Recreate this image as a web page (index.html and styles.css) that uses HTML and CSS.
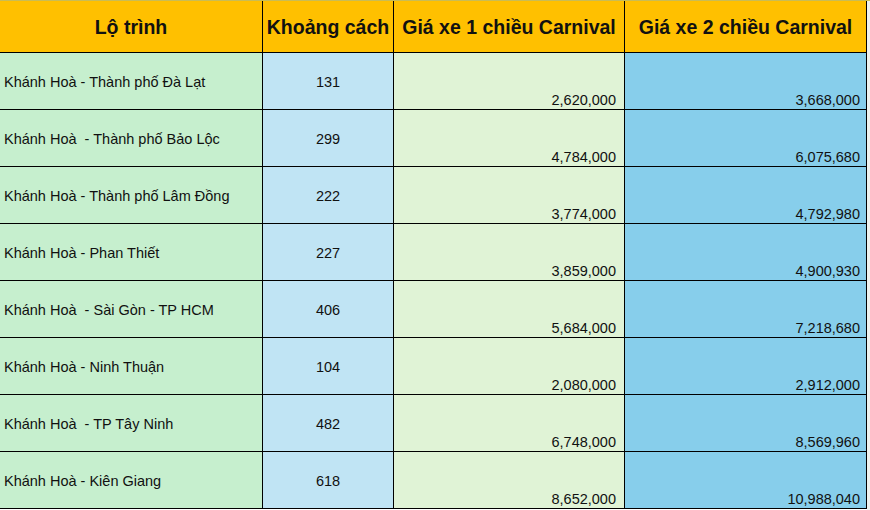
FILE: index.html
```html
<!DOCTYPE html>
<html lang="vi">
<head>
<meta charset="utf-8">
<link rel="stylesheet" href="styles.css">
</head>
<body>
<div class="sheet">
<table class="grid">
  <colgroup>
    <col class="c1"><col class="c2"><col class="c3"><col class="c4">
  </colgroup>
  <thead>
    <tr>
      <th>Lộ trình</th>
      <th>Khoảng cách</th>
      <th>Giá xe 1 chiều Carnival</th>
      <th>Giá xe 2 chiều Carnival</th>
    </tr>
  </thead>
  <tbody>
    <tr><td class="route">Khánh Hoà - Thành phố Đà Lạt</td><td class="dist">131</td><td class="one">2,620,000</td><td class="two">3,668,000</td></tr>
    <tr><td class="route">Khánh Hoà&nbsp; - Thành phố Bảo Lộc</td><td class="dist">299</td><td class="one">4,784,000</td><td class="two">6,075,680</td></tr>
    <tr><td class="route">Khánh Hoà - Thành phố Lâm Đồng</td><td class="dist">222</td><td class="one">3,774,000</td><td class="two">4,792,980</td></tr>
    <tr><td class="route">Khánh Hoà - Phan Thiết</td><td class="dist">227</td><td class="one">3,859,000</td><td class="two">4,900,930</td></tr>
    <tr><td class="route">Khánh Hoà&nbsp; - Sài Gòn - TP HCM</td><td class="dist">406</td><td class="one">5,684,000</td><td class="two">7,218,680</td></tr>
    <tr><td class="route">Khánh Hoà - Ninh Thuận</td><td class="dist">104</td><td class="one">2,080,000</td><td class="two">2,912,000</td></tr>
    <tr><td class="route">Khánh Hoà&nbsp; - TP Tây Ninh</td><td class="dist">482</td><td class="one">6,748,000</td><td class="two">8,569,960</td></tr>
    <tr><td class="route">Khánh Hoà - Kiên Giang</td><td class="dist">618</td><td class="one">8,652,000</td><td class="two">10,988,040</td></tr>
  </tbody>
</table>
<div class="edge"></div>
</div>
</body>
</html>
```
FILE: styles.css
```css
html, body {
  margin: 0;
  padding: 0;
  background: #ffffff;
}
body {
  font-family: "Liberation Sans", Arial, sans-serif;
  color: #111111;
  width: 870px;
  height: 510px;
  overflow: hidden;
}
.sheet {
  display: flex;
  align-items: flex-start;
  border-top: 1px solid #c9bc55;
}
.grid {
  border-collapse: separate;
  border-spacing: 0;
  table-layout: fixed;
  width: 867px;
}
.c1 { width: 263px; }
.c2 { width: 131px; }
.c3 { width: 231px; }
.c4 { width: 242px; }
.grid th, .grid td {
  box-sizing: border-box;
  border-right: 1px solid #000;
  border-bottom: 1px solid #000;
  padding: 0;
  white-space: nowrap;
  overflow: hidden;
}
.grid th {
  height: 52px;
  background: #ffc000;
  font-weight: bold;
  font-size: 19.5px;
  text-align: center;
  vertical-align: middle;
  padding-top: 2px;
}
.grid td {
  height: 57px;
  font-size: 14.5px;
}
.route {
  background: #c6efce;
  text-align: left;
  vertical-align: middle;
  padding-left: 4px !important;
  padding-top: 2px !important;
}
.dist {
  background: #c0e4f4;
  text-align: center;
  vertical-align: middle;
  padding-top: 2px !important;
}
.one {
  background: #e0f3d6;
  text-align: right;
  vertical-align: bottom;
  padding-right: 8px !important;
  padding-bottom: 1px !important;
}
.two {
  background: #87ceeb;
  text-align: right;
  vertical-align: bottom;
  padding-right: 6px !important;
  padding-bottom: 1px !important;
}
.edge {
  flex: 1;
  height: 510px;
  background: #eef2ee;
}
```
